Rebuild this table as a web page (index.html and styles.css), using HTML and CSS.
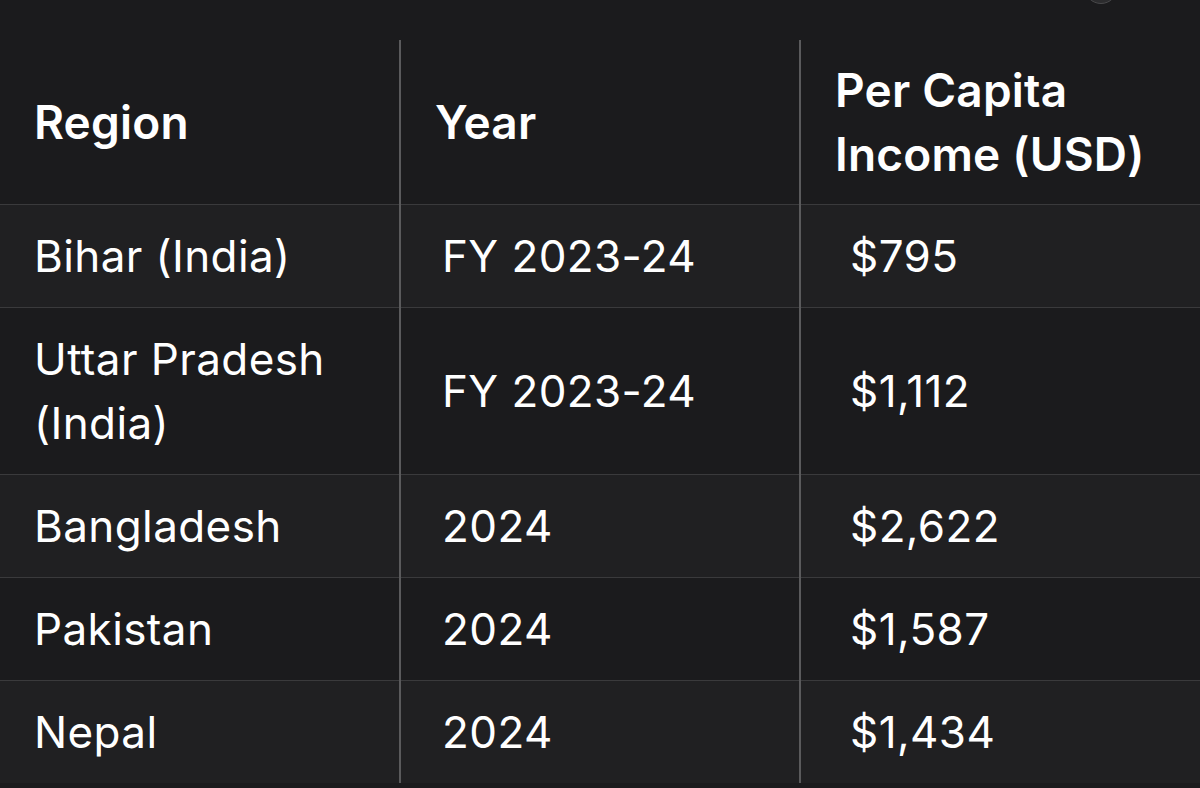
FILE: index.html
```html
<!DOCTYPE html>
<html lang="en">
<head>
<meta charset="utf-8">
<title>Per Capita Income</title>
<link rel="stylesheet" href="styles.css">
</head>
<body>
<div class="page">
  <div class="top-button"></div>
  <table class="income-table">
    <thead>
      <tr class="head-row">
        <th class="cell col-region">Region</th>
        <th class="cell col-year">Year</th>
        <th class="cell col-income">Per Capita Income (USD)</th>
      </tr>
    </thead>
    <tbody>
      <tr class="row light">
        <td class="cell col-region">Bihar (India)</td>
        <td class="cell col-year body-year">FY 2023-24</td>
        <td class="cell col-income body-income">$795</td>
      </tr>
      <tr class="row dark">
        <td class="cell col-region">Uttar Pradesh (India)</td>
        <td class="cell col-year body-year">FY 2023-24</td>
        <td class="cell col-income body-income">$1,112</td>
      </tr>
      <tr class="row light">
        <td class="cell col-region">Bangladesh</td>
        <td class="cell col-year body-year">2024</td>
        <td class="cell col-income body-income">$2,622</td>
      </tr>
      <tr class="row dark">
        <td class="cell col-region">Pakistan</td>
        <td class="cell col-year body-year">2024</td>
        <td class="cell col-income body-income">$1,587</td>
      </tr>
      <tr class="row light last">
        <td class="cell col-region">Nepal</td>
        <td class="cell col-year body-year">2024</td>
        <td class="cell col-income body-income">$1,434</td>
      </tr>
    </tbody>
  </table>
</div>
</body>
</html>
```

FILE: styles.css
```css
html, body {
  margin: 0;
  padding: 0;
  background: #1b1b1d;
}

.page {
  position: relative;
  width: 1200px;
  height: 788px;
  overflow: hidden;
  padding-top: 40px;
  box-sizing: border-box;
  font-family: Inter, "Noto Sans", "Liberation Sans", sans-serif;
  color: #ffffff;
}

.top-button {
  position: absolute;
  left: 1084px;
  top: -30px;
  width: 32px;
  height: 32px;
  border-radius: 50%;
  background: #2c2c2e;
  border: 1px solid #48484a;
}

.income-table {
  width: 1200px;
  border-collapse: collapse;
  table-layout: fixed;
}

.cell {
  width: 400px;
  padding: 19px 20px 19px 34px;
  font-size: 44px;
  line-height: 64px;
  letter-spacing: 0.4px;
  text-align: left;
  vertical-align: middle;
  box-sizing: border-box;
  border-bottom: 1px solid #3a3a3c;
}

.head-row {
  background: #1b1b1d;
}

.head-row .cell {
  font-size: 46px;
  font-weight: 600;
  letter-spacing: 0.2px;
  padding-top: 18px;
  padding-bottom: 18px;
}

.col-region,
.col-year {
  border-right: 2px solid #5a5a5c;
}

.body-year {
  padding-left: 41px;
}

.body-income {
  padding-left: 49px;
}

.row {
  font-weight: 400;
}

.row.light {
  background: #202022;
}

.row.dark {
  background: #1b1b1d;
}

.row.last .cell {
  border-bottom: none;
}
```
